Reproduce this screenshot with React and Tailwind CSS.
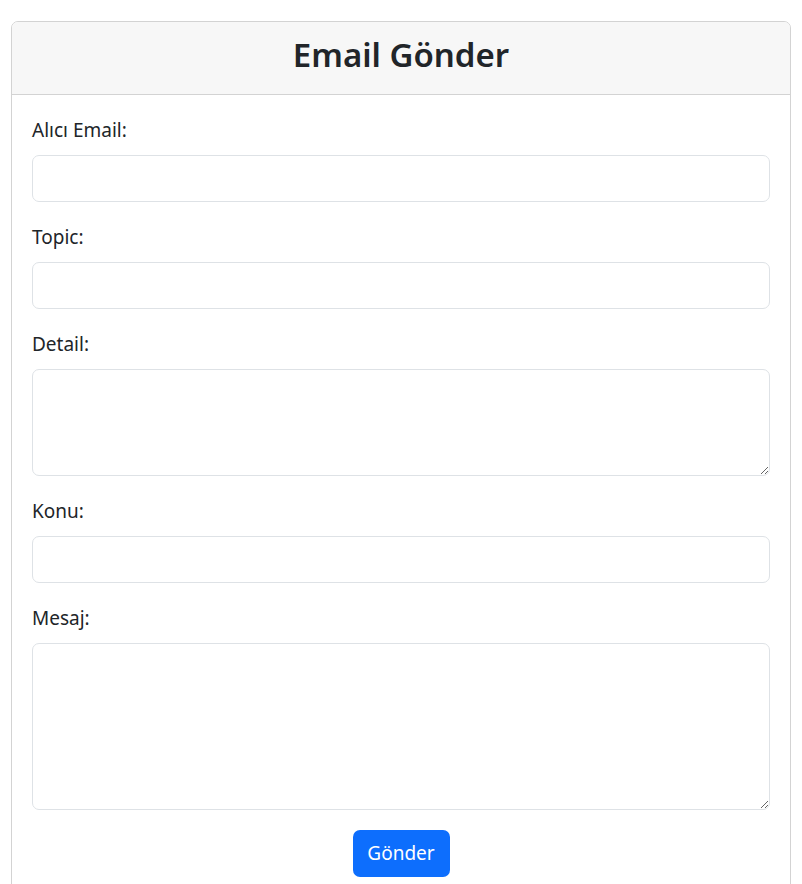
export default function App() {
  const fields = [
    { label: "Alıcı Email:", type: "input" },
    { label: "Topic:", type: "input" },
    { label: "Detail:", type: "textarea", h: "h-[107px]" },
    { label: "Konu:", type: "input" },
    { label: "Mesaj:", type: "textarea", h: "h-[167px]" },
  ];

  return (
    <div
      className="min-h-screen bg-white pt-[21px] px-[11px] text-[#212529]"
      style={{ fontFamily: '"Noto Sans", "Open Sans", sans-serif' }}
    >
      <div className="border border-[#d3d3d3] rounded-[7px] overflow-hidden">
        <div className="bg-[#f7f7f7] border-b border-[#d3d3d3] px-5 pt-[12px] pb-[18px]">
          <h3 className="text-[33px] leading-[42px] font-semibold text-center">Email Gönder</h3>
        </div>
        <form className="p-5" onSubmit={(e) => e.preventDefault()}>
          {fields.map((f) => (
            <div key={f.label} className="mb-5">
              <label className="block text-[19px] leading-[30px] mb-[10px]">{f.label}</label>
              {f.type === "input" ? (
                <input
                  type="text"
                  className="block w-full h-[47px] border border-[#dee2e6] rounded-[7px] px-4 text-[19px] outline-none"
                />
              ) : (
                <textarea
                  className={`block w-full ${f.h} border border-[#dee2e6] rounded-[7px] px-4 py-2 text-[19px] outline-none`}
                />
              )}
            </div>
          ))}
          <div className="flex justify-center">
            <button
              type="submit"
              className="h-[47px] w-[97px] bg-[#0d6efd] text-white text-[19px] rounded-[7px]"
            >
              Gönder
            </button>
          </div>
        </form>
      </div>
    </div>
  );
}
